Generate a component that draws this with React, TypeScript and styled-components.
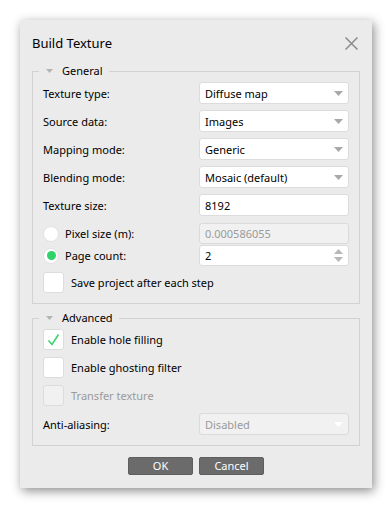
import styled, { createGlobalStyle } from "styled-components";

const GlobalStyle = createGlobalStyle`
    html, body {
        margin: 0;
        padding: 0;
        background: #ffffff;
    }
    body {
        font-family: "Noto Sans", "Liberation Sans", sans-serif;
        font-size: 11px;
        color: #000000;
    }
`

const Page = styled.div`
    width: 392px;
    height: 508px;
    padding: 20px;
    box-sizing: border-box;
`

const Dialog = styled.div`
    width: 352px;
    height: 468px;
    background: #ebebeb;
    box-shadow: 2px 3px 10px rgba(0, 0, 0, 0.45);
    display: flex;
    flex-direction: column;
`

const Header = styled.header`
    display: flex;
    align-items: center;
    justify-content: space-between;
    padding: 14px 14px 0 12px;
`

const Title = styled.h1`
    margin: 0;
    font-size: 13px;
    line-height: 18px;
    font-weight: 400;
    color: #000000;
`

const CloseButton = styled.button`
    border: 0;
    padding: 0;
    background: none;
    width: 13px;
    height: 13px;
    display: flex;
`

const Body = styled.div`
    padding: 11px 12px 0 12px;
    display: flex;
    flex-direction: column;
    gap: 6px;
`

const Group = styled.fieldset`
    margin: 0;
    padding: 3px 10px 10px 10px;
    border: 1px solid #d2d2d2;
    min-inline-size: 0;
    display: flex;
    flex-direction: column;
    gap: ${p => p.$gap}px;
`

const Legend = styled.legend`
    margin-left: -4px;
    padding: 0 6px 0 7px;
    line-height: 16px;
    display: flex;
    align-items: center;
    gap: 9px;
    color: #000000;
`

const Row = styled.div`
    display: grid;
    grid-template-columns: 1fr 150px;
    align-items: center;
    height: ${p => p.$h ?? 22}px;
`

const Label = styled.span`
    color: #000000;
`

const Field = styled.div`
    height: 100%;
    box-sizing: border-box;
    border: 1px solid ${p => (p.$disabled ? "#dadada" : "#dcdcdc")};
    border-radius: 3px;
    background: ${p => (p.$disabled ? "#f1f1f1" : "#ffffff")};
    color: ${p => (p.$disabled ? "#9a9a9a" : "#000000")};
    display: flex;
    align-items: center;
    justify-content: space-between;
    padding: 0 5px 0 5px;
`

const RadioGroup = styled.div`
    display: flex;
    flex-direction: column;
    gap: 1px;
    margin-top: 1px;
`

const RadioLabel = styled.label`
    display: flex;
    align-items: center;
    gap: 6px;
`

const RadioDot = styled.span`
    width: 16px;
    height: 16px;
    box-sizing: border-box;
    border-radius: 50%;
    background: #ffffff;
    border: 1px solid #e2e2e2;
    display: flex;
    align-items: center;
    justify-content: center;

    &::after {
        content: "";
        width: 9px;
        height: 9px;
        border-radius: 50%;
        background: ${p => (p.$checked ? "#2fd26a" : "transparent")};
    }
`

const CheckRow = styled.label`
    display: flex;
    align-items: center;
    gap: 7px;
    height: 21px;
    color: ${p => (p.$disabled ? "#9a9a9a" : "#000000")};
`

const Box = styled.span`
    width: 21px;
    height: 21px;
    box-sizing: border-box;
    border: 1px solid #dcdcdc;
    border-radius: 3px;
    background: ${p => (p.$disabled ? "#f1f1f1" : "#ffffff")};
    display: flex;
`

const Spin = styled.span`
    display: flex;
    flex-direction: column;
    gap: 3px;
`

const Buttons = styled.div`
    display: flex;
    justify-content: center;
    gap: 6px;
    margin-top: 11px;
`

const Button = styled.button`
    width: 65px;
    height: 18px;
    padding: 0;
    border: 1px solid #5e5e5e;
    border-radius: 2px;
    background: #6b6b6b;
    color: #ffffff;
    font-family: inherit;
    font-size: 11px;
    line-height: 16px;
`

const Arrow = ({ up, color = "#a8a8a8" }: { up?: boolean; color?: string }) => (
    <svg width="9" height="5" viewBox="0 0 9 5">
        <path d={up ? "M0 5 L4.5 0 L9 5 Z" : "M0 0 L9 0 L4.5 5 Z"} fill={color} />
    </svg>
)

const Combo = ({ value, disabled }: { value: string; disabled?: boolean }) => (
    <Field $disabled={disabled}>
        <span>{value}</span>
        <Arrow color={disabled ? "#ffffff" : "#a8a8a8"} />
    </Field>
)

const Check = ({ checked, disabled, children }: { checked?: boolean; disabled?: boolean; children: string }) => (
    <CheckRow $disabled={disabled}>
        <Box $disabled={disabled}>
            {checked && (
                <svg width="19" height="19" viewBox="0 0 19 19">
                    <path d="M4.5 10.5 L8 14.5 L14.5 4.5" fill="none" stroke="#3bd46f" strokeWidth="1.6" />
                </svg>
            )}
        </Box>
        {children}
    </CheckRow>
)

const GroupTitle = ({ children }: { children: string }) => (
    <Legend>
        <svg width="7" height="4" viewBox="0 0 7 4">
            <path d="M0 0 L7 0 L3.5 4 Z" fill="#b4b4b4" />
        </svg>
        {children}
    </Legend>
)

export default function App() {
    return (
        <Page>
            <GlobalStyle />
            <Dialog>
                <Header>
                    <Title>Build Texture</Title>
                    <CloseButton aria-label="Close">
                        <svg width="13" height="13" viewBox="0 0 13 13">
                            <path d="M0.5 0.5 L12.5 12.5 M12.5 0.5 L0.5 12.5" stroke="#8c8c8c" strokeWidth="1.5" />
                        </svg>
                    </CloseButton>
                </Header>
                <Body>
                    <Group $gap={6}>
                        <GroupTitle>General</GroupTitle>
                        <Row>
                            <Label>Texture type:</Label>
                            <Combo value="Diffuse map" />
                        </Row>
                        <Row>
                            <Label>Source data:</Label>
                            <Combo value="Images" />
                        </Row>
                        <Row>
                            <Label>Mapping mode:</Label>
                            <Combo value="Generic" />
                        </Row>
                        <Row>
                            <Label>Blending mode:</Label>
                            <Combo value="Mosaic (default)" />
                        </Row>
                        <Row>
                            <Label>Texture size:</Label>
                            <Field>8192</Field>
                        </Row>
                        <RadioGroup>
                            <Row $h={21}>
                                <RadioLabel>
                                    <RadioDot />
                                    Pixel size (m):
                                </RadioLabel>
                                <Field $disabled>0.000586055</Field>
                            </Row>
                            <Row $h={21}>
                                <RadioLabel>
                                    <RadioDot $checked />
                                    Page count:
                                </RadioLabel>
                                <Field>
                                    <span>2</span>
                                    <Spin>
                                        <Arrow up color="#b8b8b8" />
                                        <Arrow color="#b8b8b8" />
                                    </Spin>
                                </Field>
                            </Row>
                        </RadioGroup>
                        <Check>Save project after each step</Check>
                    </Group>
                    <Group $gap={7}>
                        <GroupTitle>Advanced</GroupTitle>
                        <Check checked>Enable hole filling</Check>
                        <Check>Enable ghosting filter</Check>
                        <Check disabled>Transfer texture</Check>
                        <Row>
                            <Label>Anti-aliasing:</Label>
                            <Combo value="Disabled" disabled />
                        </Row>
                    </Group>
                </Body>
                <Buttons>
                    <Button>OK</Button>
                    <Button>Cancel</Button>
                </Buttons>
            </Dialog>
        </Page>
    )
}
